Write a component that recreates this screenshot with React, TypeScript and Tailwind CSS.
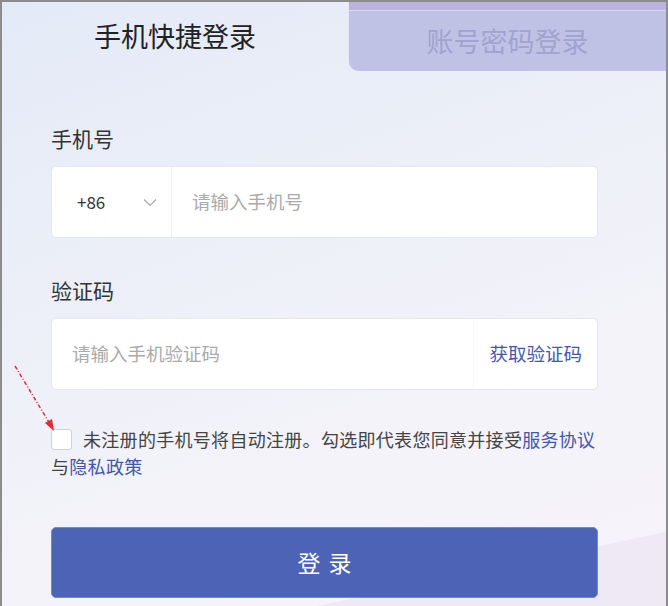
import React, { useState } from 'react';

const FONT = "font-['Noto_Sans_CJK_SC','Noto_Sans',sans-serif]";

export default function App() {
  const [agree, setAgree] = useState(false);
  const [tab, setTab] = useState<'sms' | 'pwd'>('sms');

  return (
    <div className={`relative w-[668px] h-[606px] overflow-hidden border-t-2 border-x-2 border-[#8c8c8c] bg-[linear-gradient(160deg,#e3eaf7_0%,#eceff8_35%,#f4f3f9_70%,#f6f4fa_100%)] ${FONT}`}>
      {/* 右下角淡紫色块 */}
      <div className="absolute -right-10 bottom-[-40px] w-[520px] h-[120px] bg-[#efe9f6] -rotate-[12deg] origin-bottom-right" />

      {/* 标签页 */}
      <div className="relative flex h-[69px]">
        <button
          onClick={() => setTab('sms')}
          className="w-[346px] flex items-center justify-center text-[27px] text-[#222]"
        >
          手机快捷登录
        </button>
        <button
          onClick={() => setTab('pwd')}
          className="flex-1 flex flex-col rounded-bl-[10px] overflow-hidden bg-[#c0c2e5] border-l border-[#e4e6f5]"
        >
          <div className="h-[8px] w-full bg-[#b9b3dd]" />
          <div className="h-px w-full bg-[#d9daf0]" />
          <div className="flex-1 flex items-center justify-center text-[27px] text-[#a1a3d0]">
            账号密码登录
          </div>
        </button>
      </div>

      <div className="relative pl-[49px] pr-[68px] pt-[53px]">
        <div className="text-[21px] leading-[28px] text-[#333]">手机号</div>
        <div className="mt-[14px] h-[72px] flex items-stretch bg-white rounded-[5px] border border-[#e4e7ef]">
          <div className="w-[120px] flex items-center justify-between pl-[25px] pr-[14px] border-r border-[#eef0f4]">
            <span className="text-[17px] text-[#333]">+86</span>
            <svg width="14" height="9" viewBox="0 0 14 9" fill="none" stroke="#a8a8b0" strokeWidth="1.2">
              <path d="M1 1.5 L7 7.5 L13 1.5" />
            </svg>
          </div>
          <input
            placeholder="请输入手机号"
            className="flex-1 px-[20px] text-[18.5px] text-[#333] placeholder:text-[#aaaaaa] outline-none bg-transparent"
          />
        </div>

        <div className="mt-[38px] text-[21px] leading-[28px] text-[#333]">验证码</div>
        <div className="mt-[14px] h-[72px] flex items-stretch bg-white rounded-[5px] border border-[#e4e7ef]">
          <input
            placeholder="请输入手机验证码"
            className="flex-1 px-[20px] text-[18.5px] text-[#333] placeholder:text-[#aaaaaa] outline-none bg-transparent"
          />
          <button className="w-[124px] border-l border-[#f7f8fa] text-[18.5px] text-[#4658a8] text-right pr-[15px]">
            获取验证码
          </button>
        </div>

        <div className="mt-[36px] flex items-start">
          <span
            onClick={() => setAgree(!agree)}
            className={`mt-[3px] shrink-0 w-[21px] h-[21px] rounded-[3px] border ${agree ? 'bg-[#4c63b6] border-[#4c63b6]' : 'bg-white border-[#cfcfd6]'}`}
          />
          <p className="ml-[11px] -mr-[2px] text-[18px] tracking-[0.3px] leading-[27px] text-[#444] whitespace-nowrap">
            未注册的手机号将自动注册。勾选即代表您同意并接受<a className="text-[#4356a8]">服务协议</a>
          </p>
        </div>
        <p className="text-[18px] tracking-[0.3px] leading-[27px] text-[#444]">
          与<a className="text-[#4356a8]">隐私政策</a>
        </p>

        <button className="mt-[47px] w-full h-[71px] rounded-[5px] bg-[#4c63b6] text-white text-[23px] tracking-[8px] pl-[8px] border border-[#6f8ad0]">
          登录
        </button>
      </div>

      {/* 红色虚线箭头 */}
      <svg className="absolute left-[10px] top-[360px]" width="50" height="72" viewBox="0 0 50 72" fill="none">
        <path d="M3 4 L38 62" stroke="#d9303a" strokeWidth="1.5" strokeDasharray="4 2 1 2" />
        <path d="M42 69 L33 61 L40 57 Z" fill="#e02a35" />
      </svg>
    </div>
  );
}
